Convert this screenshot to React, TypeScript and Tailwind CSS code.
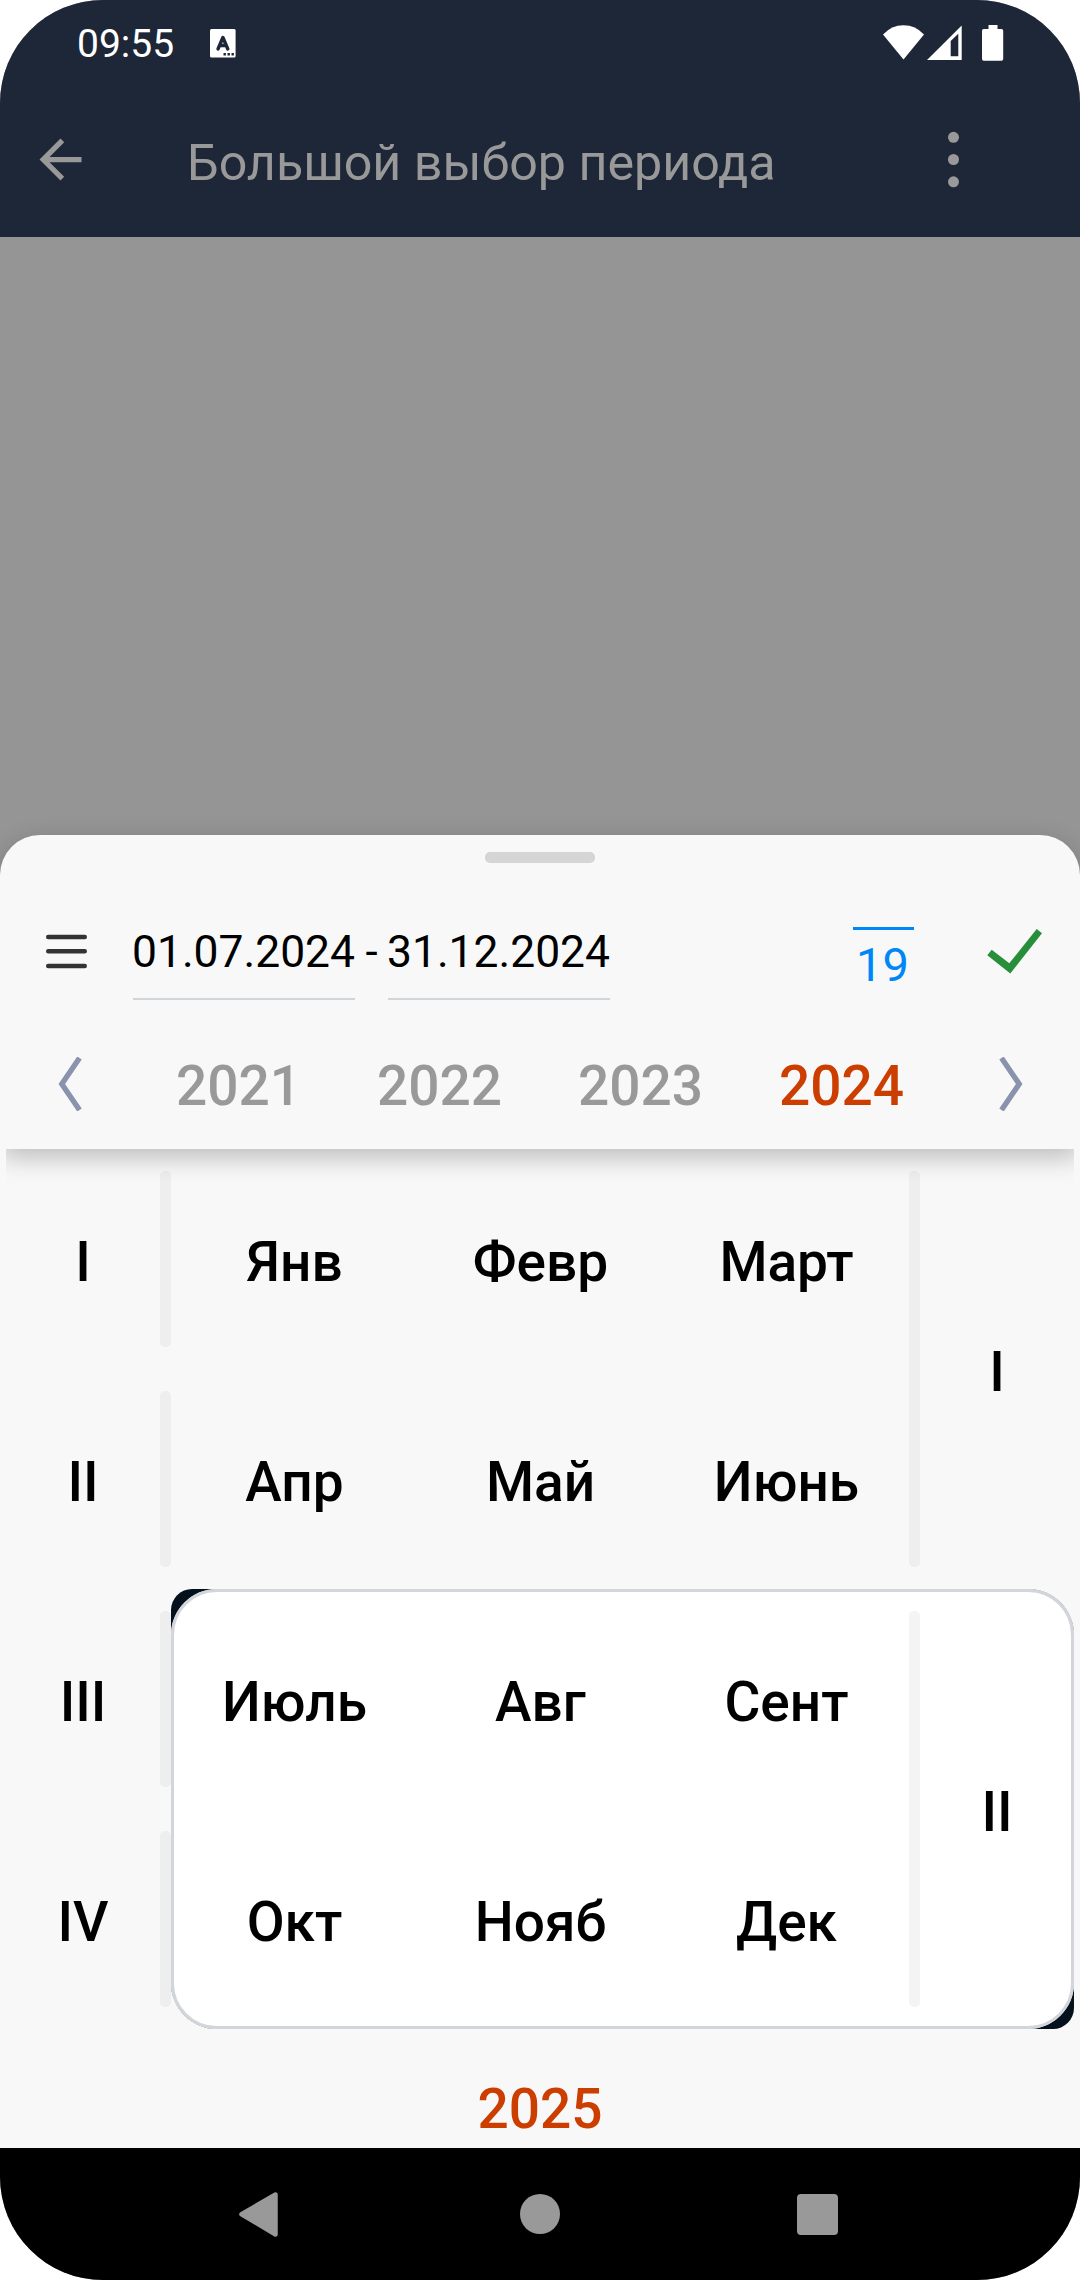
import React from "react";

const months = [
  ["Янв", "Февр", "Март"],
  ["Апр", "Май", "Июнь"],
  ["Июль", "Авг", "Сент"],
  ["Окт", "Нояб", "Дек"],
];
const quarters = ["I", "II", "III", "IV"];
const years = ["2021", "2022", "2023", "2024"];

function StatusBar() {
  return (
    <div className="flex h-[81px] items-start pl-[77px] pr-[76px] text-white">
      <div className="mt-[21px] w-[97px] whitespace-nowrap text-[39px] leading-[46px]">09:55</div>
      <svg className="ml-[36px] mt-[29px]" width="26" height="29" viewBox="0 0 26 29">
        <rect width="25.6" height="28.6" rx="1.5" fill="#fff" />
        <path d="M8 20 L12.9 8.500 L17.800 20 M9.500 16.500 H16.300" fill="none" stroke="#1e2738" strokeWidth="3.400" strokeLinecap="round" strokeLinejoin="round" />
        <path d="M13.500 24h2.400v2.400h-2.400z M17.500 24h2.400v2.400h-2.400z M21.500 24h2.400v2.400h-2.400z" fill="#1e2738" />
      </svg>
      <div className="ml-auto mt-[25px] flex">
        <svg width="41" height="36" viewBox="0 0 41 36">
          <path d="M0 9.500 Q8.500 0.300 20.500 0.300 Q32.500 0.300 41 9.500 L20.500 34.500 Z" fill="#fff" />
        </svg>
        <svg className="ml-[3px]" width="35" height="36" viewBox="0 0 35 36">
          <path fillRule="evenodd" d="M34.700 0.500 V35 H0 Z M23.700 16 V31.300 H31.300 V8.700 Z" fill="#fff" />
        </svg>
        <svg className="ml-[20px]" width="22" height="36" viewBox="0 0 22 36">
          <path d="M6.500 0h9v4h4a1.700 1.700 0 0 1 1.700 1.700v28.300a1.700 1.700 0 0 1-1.700 1.700h-17.800a1.700 1.700 0 0 1-1.700-1.700v-28.300a1.700 1.700 0 0 1 1.700-1.700h4.800z" fill="#fff" />
        </svg>
      </div>
    </div>
  );
}

function AppBar() {
  return (
    <div className="flex h-[156px] items-center pl-[29px] pr-[95px] text-[#999999]">
      <svg className="shrink-0" width="63" height="63" viewBox="0 0 24 24" fill="currentColor">
        <path d="M20 11H7.830l5.590-5.590L12 4l-8 8 8 8 1.410-1.410L7.830 13H20v-2z" />
      </svg>
      <h1 className="ml-[95px] mt-[7px] whitespace-nowrap text-[50.2px] leading-[60px]">Большой выбор периода</h1>
      <svg className="ml-auto" width="63" height="63" viewBox="0 0 63 63" fill="currentColor">
        <circle cx="31.500" cy="9.300" r="5.500" />
        <circle cx="31.500" cy="31.500" r="5.500" />
        <circle cx="31.500" cy="53.800" r="5.500" />
      </svg>
    </div>
  );
}

function DateRow() {
  return (
    <div className="flex h-[150px] items-start pl-[46px] pr-[38px] text-black">
      <svg className="mt-[71px]" width="41" height="35" viewBox="0 0 41 35">
        <path d="M2.200 3H38.800 M2.200 17.300H38.800 M2.200 32H38.800" stroke="#333" strokeWidth="4.400" strokeLinecap="round" />
      </svg>
      <div className="ml-[46px] mt-[63px] h-[74px] w-[222px] whitespace-nowrap border-b-2 border-[#d0d5d9] text-[44.4px] leading-[53px]">
        <span className="-ml-px">01.07.2024</span>
      </div>
      <div className="mt-[63px] w-[33px] text-center text-[44px] leading-[53px]">-</div>
      <div className="mt-[63px] h-[74px] w-[222px] whitespace-nowrap border-b-2 border-[#d0d5d9] text-[44.4px] leading-[53px]">
        <span className="-ml-px">31.12.2024</span>
      </div>
      <div className="ml-auto mt-[64px] h-[70px] w-[61px] border-t-[3.500px] border-[#0087f7] pr-[2px] text-center text-[47px] leading-[70px] text-[#0087f7]">19</div>
      <svg className="ml-[73px] mt-[66px]" width="55" height="45" viewBox="0 0 55 45">
        <path d="M0.300 26.200 L4.700 20.700 L22.300 34.300 L49.700 0 L55 4.200 L23.300 44.500 Z" fill="#278e3a" />
      </svg>
    </div>
  );
}

function YearRow() {
  return (
    <div className="flex h-[136px] items-center pt-[5px]">
      <div className="flex w-[138px] pl-[58px]">
        <svg width="24" height="54" viewBox="0 0 24 54">
          <path d="M21.500 1 L3.800 27 L21.500 53" fill="none" stroke="#8a93ad" strokeWidth="5.400" />
        </svg>
      </div>
      <div className="grid flex-1 grid-cols-4 pt-[4px] text-center text-[55px] font-medium leading-[64px] text-[#999999]">
        {years.map((y) => (
          <div key={y} className={y === "2024" ? "text-[#cc3d00]" : ""}>{y}</div>
        ))}
      </div>
      <div className="flex w-[138px] justify-end pr-[57px]">
        <svg width="24" height="54" viewBox="0 0 24 54">
          <path d="M2.500 1 L20.200 27 L2.500 53" fill="none" stroke="#8a93ad" strokeWidth="5.400" />
        </svg>
      </div>
    </div>
  );
}

function HalfYear({ index, selected }: { index: number; selected?: boolean }) {
  const body = (
    <>
      <div className="grid flex-1 grid-cols-3 grid-rows-2">
        {months.slice(index * 2, index * 2 + 2).flat().map((m) => (
          <div key={m} className="flex items-center justify-center pl-px pt-[6px]">{m}</div>
        ))}
      </div>
      <div className={selected ? "my-[22px] w-[11px] rounded-[5px] bg-[#f4f4f4]" : "my-[22px] w-[11px] rounded-[5px] bg-[#eeeeee]"} />
      <div className="flex w-[154px] items-center justify-center pt-[6px]">{quarters[index]}</div>
    </>
  );
  return (
    <div className="flex h-[440px]">
      <div className="grid w-[165px] grid-rows-2">
        {quarters.slice(index * 2, index * 2 + 2).map((q) => (
          <div key={q} className="flex">
            <div className="flex flex-1 items-center justify-center pt-[6px]">{q}</div>
            <div className="my-[22px] w-[11px] rounded-[5px] bg-[#eeeeee]" />
          </div>
        ))}
      </div>
      {selected ? (
        <div className="flex flex-1 rounded-bl-[46px] rounded-br-[21px] rounded-tl-[21px] rounded-tr-[46px] bg-[#04101c]">
          <div className="relative flex flex-1 rounded-[46px] bg-white after:pointer-events-none after:absolute after:inset-0 after:rounded-[46px] after:border-[3px] after:border-[#d2d6da]">{body}</div>
        </div>
      ) : (
        <div className="flex flex-1">{body}</div>
      )}
    </div>
  );
}

function NavBar() {
  return (
    <div className="flex h-[132px] items-start bg-black pt-[44px]">
      <svg className="ml-[239px]" width="39" height="45" viewBox="0 0 39 45">
        <path d="M2.500 22.200 L36.500 2.500 V42.500 Z" fill="#999" stroke="#999" strokeWidth="4.500" strokeLinejoin="round" />
      </svg>
      <div className="ml-[242px] mt-[2px] h-[40px] w-[40px] rounded-full bg-[#999999]" />
      <div className="ml-[237px] mt-[2px] h-[41px] w-[41px] rounded-[4px] bg-[#999999]" />
    </div>
  );
}

export default function App() {
  return (
    <div className="h-[2280px] w-[1080px] bg-white font-['Roboto',sans-serif]">
      <div className="flex h-full flex-col overflow-hidden rounded-[103px] bg-[#959595]">
        <header className="h-[237px] bg-[#1e2738]">
          <StatusBar />
          <AppBar />
        </header>
        <div className="h-[598px]" />
        <main className="flex flex-1 flex-col rounded-t-[40px] bg-[#f8f8f8] shadow-[0_6px_24px_rgba(0,0,0,0.2)]">
          <div className="flex h-[28px] justify-center pt-[17px]">
            <div className="h-[11px] w-[110px] rounded-[5px] bg-[#d5d5d5]" />
          </div>
          <DateRow />
          <YearRow />
          <div className="relative mx-[6px] flex-1 text-[55px] font-medium leading-[64px] text-black">
            <div className="pointer-events-none absolute inset-x-0 top-0 h-[34px] overflow-hidden">
              <div className="-mx-[5px] -mt-[40px] h-[40px] shadow-[0_8px_26px_rgba(0,0,0,0.25)]" />
            </div>
            <HalfYear index={0} />
            <HalfYear index={1} selected />
            <div className="pt-[48px] text-center text-[#cc3d00]">2025</div>
          </div>
        </main>
        <NavBar />
      </div>
    </div>
  );
}
